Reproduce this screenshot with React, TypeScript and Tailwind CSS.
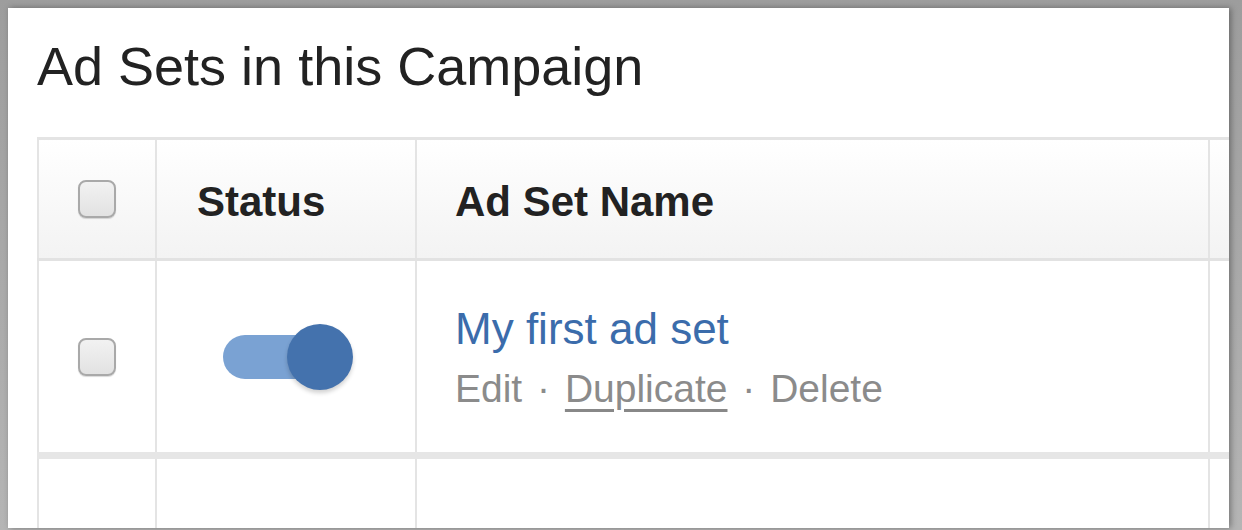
import React from "react";

const font = { fontFamily: '"Liberation Sans", Arial, sans-serif' };

const Checkbox = () => (
  <div className="h-[38px] w-[38px] rounded-[8px] border-2 border-[#a9a9a9] bg-gradient-to-b from-[#f2f2f2] to-[#e2e2e2] shadow-[0_1px_1px_rgba(0,0,0,0.15)]" />
);

const Toggle = () => (
  <div className="flex items-center">
    <div className="h-[44px] w-[96px] rounded-full bg-[#7aa2d3]" />
    <div className="-ml-[32px] h-[66px] w-[66px] rounded-full bg-[#4472ad] shadow-[0_3px_4px_rgba(0,0,0,0.18)]" />
  </div>
);

export default function App() {
  return (
    <div
      className="flex h-[530px] w-[1242px] bg-gradient-to-b from-[#9d9d9d] to-[#b5b5b5] pt-[8px] pb-[2px] pl-[8px] pr-[13px]"
      style={font}
    >
      <div className="flex flex-1 flex-col overflow-hidden bg-white shadow-[2px_0_6px_rgba(0,0,0,0.35)]">
        <h1 className="pl-[29px] pt-[28px] text-[54px] leading-[60px] text-[#222]">
          Ad Sets in this Campaign
        </h1>

        <div className="ml-[29px] mt-[41px] flex flex-col border-t-[3px] border-[#e4e4e4]">
          {/* header */}
          <div className="flex h-[121px] border-b-[3px] border-[#e2e2e2] bg-gradient-to-b from-white to-[#f3f3f3]">
            <div className="flex w-[120px] items-center justify-center border-l-2 border-r-2 border-[#e4e4e4]">
              <Checkbox />
            </div>
            <div className="flex w-[260px] items-center border-r-2 border-[#e4e4e4] pl-[40px] pt-[4px] text-[42px] font-bold text-[#222]">
              Status
            </div>
            <div className="flex w-[793px] items-center border-r-2 border-[#e4e4e4] pl-[38px] pt-[4px] text-[42px] font-bold text-[#222]">
              Ad Set Name
            </div>
            <div className="flex-1" />
          </div>

          {/* row */}
          <div className="flex h-[198px] border-b-[7px] border-[#e6e6e6]">
            <div className="flex w-[120px] items-center justify-center border-l-2 border-r-2 border-[#e4e4e4]">
              <Checkbox />
            </div>
            <div className="flex w-[260px] items-center justify-center border-r-2 border-[#e4e4e4] pl-[4px]">
              <Toggle />
            </div>
            <div className="flex w-[793px] flex-col justify-center border-r-2 border-[#e4e4e4] pl-[38px] pt-[4px]">
              <div className="text-[44px] leading-[60px] text-[#3b6cab]">My first ad set</div>
              <div className="text-[39px] leading-[60px] text-[#8b8b8b]">
                Edit <span className="px-[4px]">·</span>{" "}
                <span className="underline decoration-[3px] decoration-[#888] underline-offset-[7px]">Duplicate</span>{" "}
                <span className="px-[4px]">·</span> Delete
              </div>
            </div>
            <div className="flex-1" />
          </div>

          {/* next row, cut off */}
          <div className="flex h-[80px]">
            <div className="w-[120px] border-l-2 border-r-2 border-[#e4e4e4]" />
            <div className="w-[260px] border-r-2 border-[#e4e4e4]" />
            <div className="w-[793px] border-r-2 border-[#e4e4e4]" />
            <div className="flex-1" />
          </div>
        </div>
      </div>
    </div>
  );
}
